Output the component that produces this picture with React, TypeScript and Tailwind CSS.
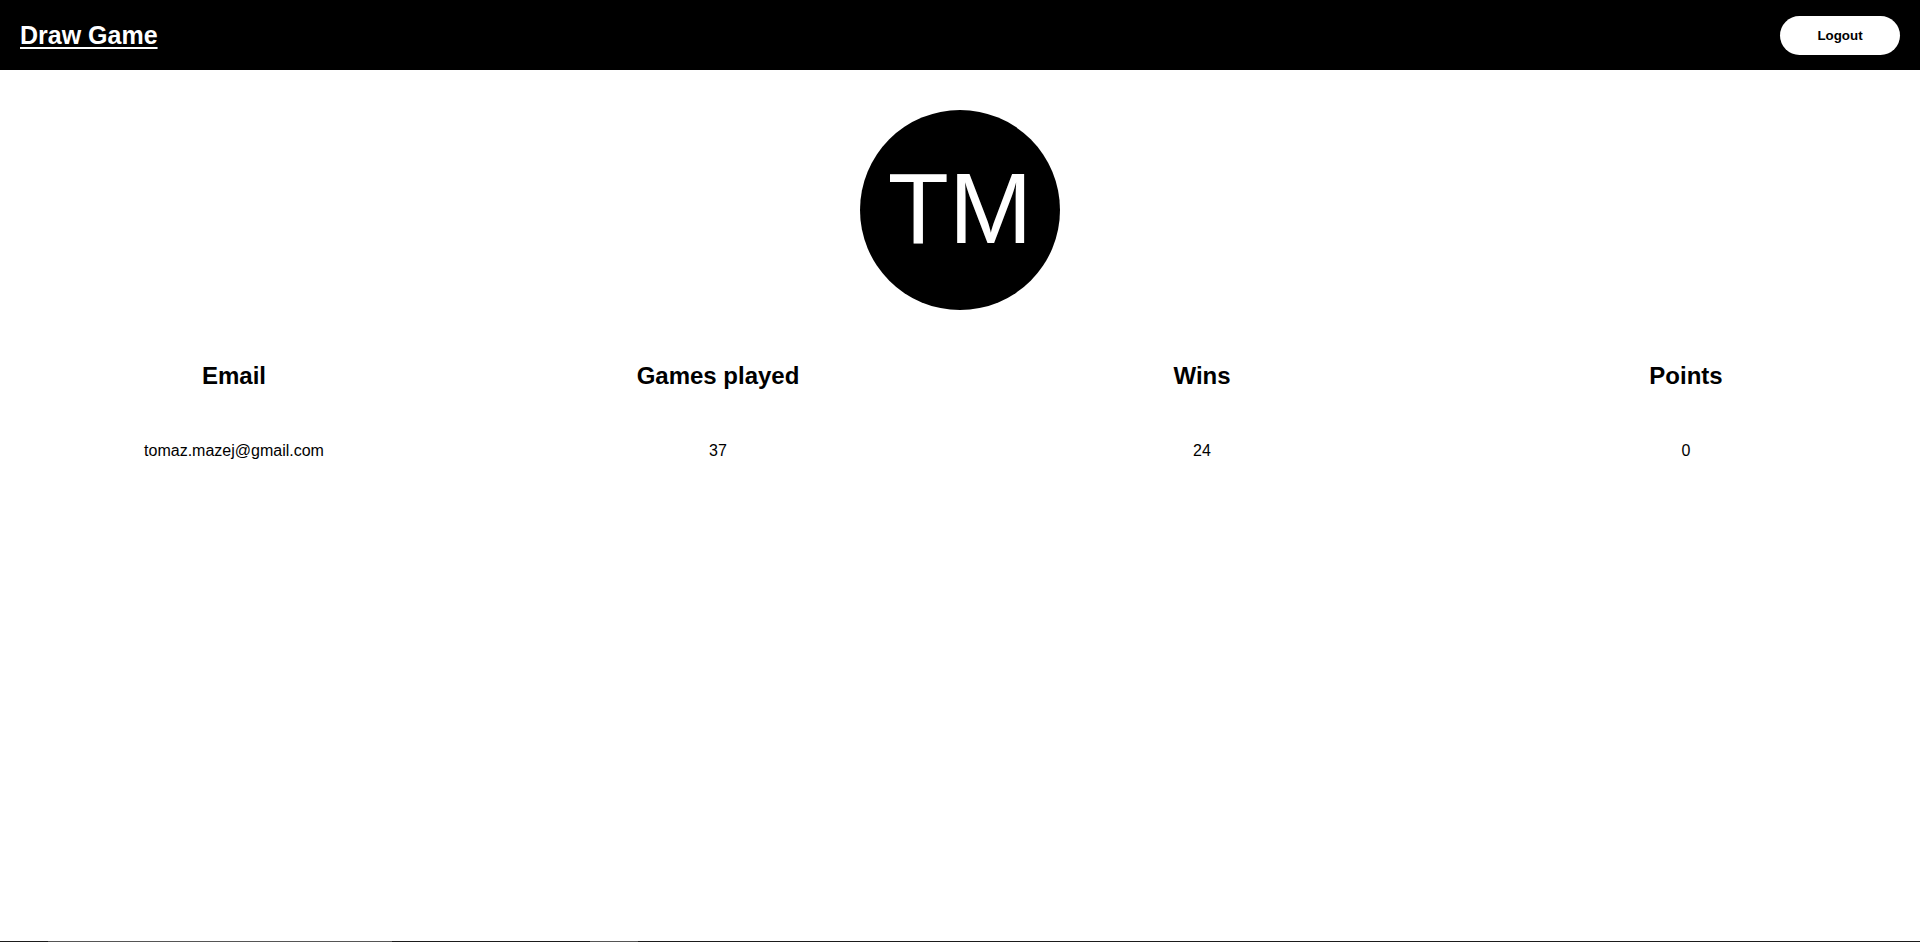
import React from "react";

const font = { fontFamily: '"Liberation Sans", Arial, sans-serif' };

export default function App() {
  const cols = [
    { h: "Email", v: "tomaz.mazej@gmail.com" },
    { h: "Games played", v: "37" },
    { h: "Wins", v: "24" },
    { h: "Points", v: "0" },
  ];
  return (
    <div className="flex h-[942px] flex-col bg-white text-black" style={font}>
      <header className="flex h-[70px] shrink-0 items-center justify-between bg-black pl-5 pr-5">
        <a href="#" className="text-[25px] font-bold leading-8 text-white underline decoration-2 underline-offset-[3px]">
          Draw Game
        </a>
        <button className="h-[39px] w-[120px] rounded-full bg-white pt-px text-[13.333px] font-bold text-black">
          Logout
        </button>
      </header>
      <main className="flex-1">
        <div className="mt-10 flex justify-center">
          <div className="flex h-[200px] w-[200px] items-center justify-center rounded-full bg-black">
            <span className="-mt-[4px] text-[100px] leading-none text-white">TM</span>
          </div>
        </div>
        <div className="mt-[52px] grid grid-cols-4 gap-x-4">
          {cols.map((c) => (
            <div key={c.h} className="text-center text-[24px] font-bold leading-7">
              {c.h}
            </div>
          ))}
          {cols.map((c) => (
            <div key={c.h + "v"} className="mt-[49px] text-center text-[16px] leading-6">
              {c.v}
            </div>
          ))}
        </div>
      </main>
      <div className="flex h-px shrink-0 bg-[#1b1b1b]">
        <div className="w-[48px]" />
        <div className="w-[344px] bg-[#555]" />
        <div className="w-[198px]" />
        <div className="w-[48px] bg-[#555]" />
      </div>
    </div>
  );
}
